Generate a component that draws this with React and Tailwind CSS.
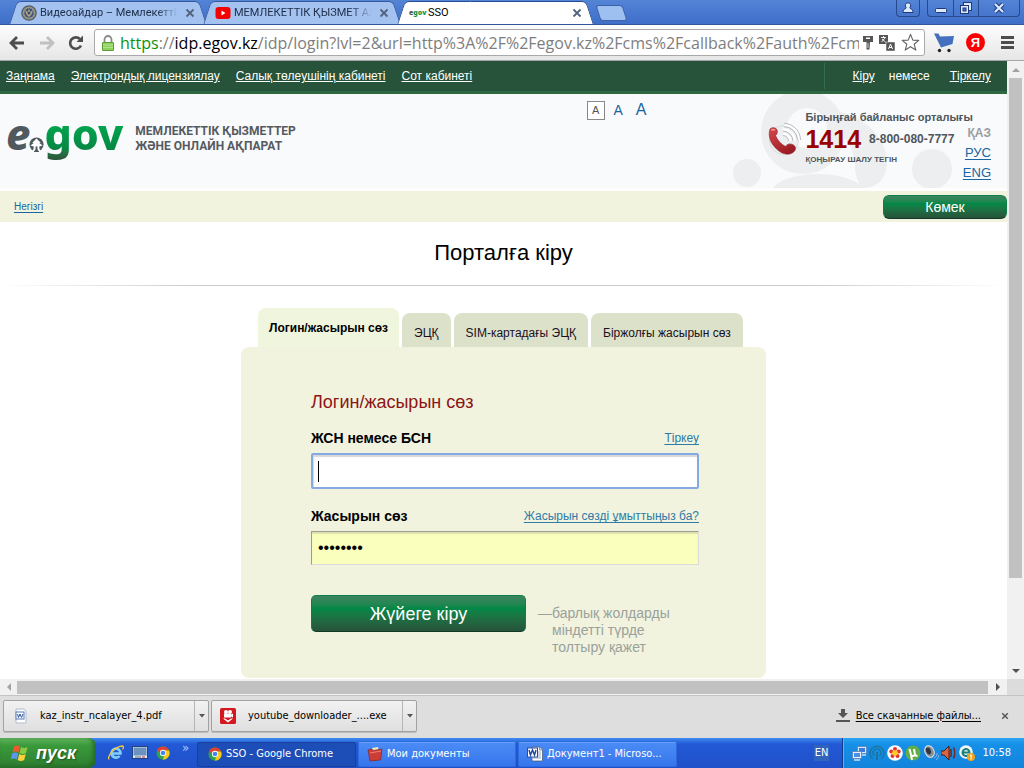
import React from "react";

const ui = "font-['DejaVu_Sans_Condensed','Noto_Sans',sans-serif]";

function CloseIcon({ className }) {
  return (
    <svg viewBox="0 0 10 10" className={className} aria-hidden="true">
      <path d="M1.5 1.5l7 7M8.500 1.500l-7 7" stroke="currentColor" strokeWidth="1.8" fill="none" />
    </svg>
  );
}

function EmblemIcon() {
  return (
    <svg viewBox="0 0 16 16" className="size-4 shrink-0" aria-hidden="true">
      <circle cx="8" cy="8" r="7.200" fill="#8c8d83" stroke="#555b66" strokeWidth="1.200" />
      <circle cx="8" cy="8" r="5" fill="#3f5379" stroke="#c4bb92" strokeWidth="1" strokeDasharray="1 1" />
      <path d="M4 5l2.500 2L8 4l1.500 3L12 5l-1.500 4.500L8 12l-2.500-2.500z" fill="#b5ac86" />
      <circle cx="8" cy="8" r="1.500" fill="#38496c" />
    </svg>
  );
}

function YoutubeIcon() {
  return (
    <svg viewBox="0 0 16 16" className="size-4 shrink-0" aria-hidden="true">
      <rect x="0.500" y="2" width="15" height="12" rx="3" fill="#f50000" />
      <path d="M6.500 5.500v5l4-2.500z" fill="#fff" />
    </svg>
  );
}

function ChromeIcon({ className }) {
  return (
    <svg viewBox="0 0 16 16" className={className} aria-hidden="true">
      <circle cx="8" cy="8" r="7.500" fill="#2fa04c" />
      <path d="M1.500 4.300A7.500 7.500 0 0 1 14.900 5H8a3.200 3.200 0 0 0-2.900 4.500z" fill="#e0402f" />
      <path d="M14.900 5A7.500 7.500 0 0 1 7.600 15.500l3.200-6.200A3.200 3.200 0 0 0 8 5z" fill="#fbc918" />
      <circle cx="8" cy="8" r="3.600" fill="#fff" />
      <circle cx="8" cy="8" r="2.700" fill="#4384ee" />
    </svg>
  );
}

function WordIcon({ className }) {
  return (
    <svg viewBox="0 0 16 16" className={className} aria-hidden="true">
      <path d="M5 1h8l2.500 2.500V15H5z" fill="#fff" stroke="#49617e" strokeWidth="0.800" />
      <path d="M12.500 1v3h3" fill="#c3d2e8" stroke="#49617e" strokeWidth="0.600" />
      <path d="M11 6h3M11 8h3M11 10h3M6 12h8" stroke="#90a5c4" strokeWidth="1" />
      <rect x="0.500" y="2" width="10" height="9" fill="#fff" stroke="#2a4c9a" />
      <path d="M2 4l1.500 5L5.500 4l2 5L9 4" stroke="#2448a0" strokeWidth="1.500" fill="none" />
    </svg>
  );
}

function BrowserTab({ icon, title, active, className }) {
  const side = active ? "bg-white border-[#284f94]" : "bg-[#a3c2ef] border-[#36599c]";
  return (
    <div className={`relative flex items-center ${className}`}>
      <span className={`absolute inset-y-0 left-0.5 w-3/5 origin-center -skew-x-[18deg] rounded-tl-[5px] border-t border-l ${side}`} />
      <span className={`absolute inset-y-0 right-0.5 w-3/5 origin-center skew-x-[18deg] rounded-tr-[5px] border-t border-r ${side}`} />
      <div className="relative flex min-w-0 flex-1 items-center gap-[3px] pr-2.5 pl-2.5">
        {icon}
        <span
          className={`min-w-0 flex-1 overflow-hidden font-['Roboto','Liberation_Sans',sans-serif] text-[11px] leading-4 whitespace-nowrap ${
            active ? "text-black" : "mask-r-from-85% text-[#20304c]"
          }`}
        >
          {title}
        </span>
        <button type="button" aria-label="Закрыть вкладку" className="ml-1 text-[#53627c]">
          <CloseIcon className="size-2.5" />
        </button>
      </div>
    </div>
  );
}

function TitleBar() {
  const win = "flex h-full items-center justify-center border-r border-[#28498c] last:border-r-0";
  return (
    <div className="flex h-[25px] shrink-0 items-start justify-between overflow-hidden border-b border-[#31569c] bg-linear-to-b from-[#5384d6] to-[#3f6ec8]">
      <div className="flex h-6 pl-[11px]">
        <BrowserTab className="mt-px w-[194px]" icon={<EmblemIcon />} title="Видеоайдар – Мемлекеттік" />
        <BrowserTab className="mt-px w-[194px]" icon={<YoutubeIcon />} title="МЕМЛЕКЕТТІК ҚЫЗМЕТ АЛУ" />
        <BrowserTab
          className="z-10 mt-px w-[193px]"
          active
          icon={
            <span className="w-4 shrink-0 overflow-visible font-['Noto_Sans'] text-[7px] leading-4 font-black whitespace-nowrap text-[#159447]">
              <span className="text-[#555]">e</span>gov
            </span>
          }
          title="SSO"
        />
        <button
          type="button"
          aria-label="Новая вкладка"
          className="mt-[5px] ml-1.5 h-4 w-[27px] skew-x-[18deg] rounded-[3px] border border-[#3b62aa] bg-[#9dc0f0]"
        />
      </div>
      <div className="flex h-[17px] gap-[7px] pr-1 text-[#e2edff]">
        <button type="button" aria-label="Пользователь" className="flex h-full w-6 items-center justify-center rounded-b border border-t-0 border-[#28498c]">
          <svg viewBox="0 0 12 12" className="size-3"><path d="M6 .8a2.700 2.700 0 0 1 2 4.500C7.500 6 8 6.500 9 6.800c1.500.5 2 1.500 2 3.700H1c0-2.200.5-3.200 2-3.700C4 6.500 4.500 6 4 5.300A2.700 2.700 0 0 1 6 .8z" fill="#dce9ff" stroke="#1d3a78" /></svg>
        </button>
        <div className="flex h-full w-[93px] rounded-b border border-t-0 border-[#28498c]">
          <button type="button" aria-label="Свернуть" className={`w-[26px] ${win}`}>
            <svg viewBox="0 0 12 12" className="size-3"><rect x="0.500" y="6.500" width="11" height="4" rx="1" fill="#dce9ff" stroke="#1d3a78" /></svg>
          </button>
          <button type="button" aria-label="Восстановить" className={`w-[25px] ${win}`}>
            <svg viewBox="0 0 14 14" className="size-3.5"><rect x="4.500" y="1.500" width="8" height="8" fill="#dce9ff" stroke="#1d3a78" /><rect x="1.500" y="4.500" width="8" height="8" fill="#dce9ff" stroke="#1d3a78" /><rect x="4" y="7" width="3" height="3" fill="#4270c8" stroke="#1d3a78" /></svg>
          </button>
          <button type="button" aria-label="Закрыть" className={`flex-1 ${win}`}>
            <svg viewBox="0 0 12 12" className="size-3"><path d="M2 2l8 8M10 2l-8 8" stroke="#1d3a78" strokeWidth="4.200" /><path d="M2 2l8 8M10 2l-8 8" stroke="#dce9ff" strokeWidth="2.200" /></svg>
          </button>
        </div>
      </div>
    </div>
  );
}

function Toolbar() {
  return (
    <div className="flex h-9 shrink-0 items-center border-b border-[#a5a5a5] bg-linear-to-b from-[#fdfdfd] to-[#e6e6e6] pr-2.5 pl-2">
      <div className="flex w-[86px] items-center gap-3 text-[#4d4d4d]">
        <button type="button" aria-label="Назад"><svg viewBox="0 0 18 16" className="h-4 w-[18px]"><path d="M9 2L3 8l6 6M3 8h13" fill="none" stroke="currentColor" strokeWidth="2.800" /></svg></button>
        <button type="button" aria-label="Вперёд" className="text-[#c0c0c0]"><svg viewBox="0 0 18 16" className="h-4 w-[18px]"><path d="M9 2l6 6-6 6M15 8H2" fill="none" stroke="currentColor" strokeWidth="2.800" /></svg></button>
        <button type="button" aria-label="Обновить"><svg viewBox="0 0 16 16" className="size-4"><path d="M13 10.500A5.700 5.700 0 1 1 12 4.200" fill="none" stroke="currentColor" strokeWidth="2.600" /><path d="M15 .5v6.500H8.500z" fill="currentColor" /></svg></button>
      </div>
      <div className="flex h-[27px] min-w-0 flex-1 items-center rounded-[3px] border border-[#a9a9a9] bg-white pr-1 pl-[7px]">
        <svg viewBox="0 0 12 16" className="h-4 w-3 shrink-0" aria-hidden="true">
          <path d="M2.500 8V4.500a3.500 3.500 0 0 1 7 0V8" fill="none" stroke="#8a8a8a" strokeWidth="1.800" />
          <rect x="0.500" y="7.500" width="11" height="8" rx="0.500" fill="#8fd05f" stroke="#5d9f34" />
          <path d="M1 10h10M1 12.500h10" stroke="#b1e38a" />
        </svg>
        <div className="ml-1.5 min-w-0 flex-1 overflow-hidden font-['Open_Sans','Noto_Sans',sans-serif] text-base leading-6 whitespace-nowrap text-[#7e7e7e]">
          <span className="text-[#0a930a]">https</span>://<span className="text-black">idp.egov.kz</span>/idp/login?lvl=2&amp;url=http%3A%2F%2Fegov.kz%2Fcms%2Fcallback%2Fauth%2Fcm
        </div>
        <div className="ml-1 flex shrink-0 items-center gap-1.5">
          <svg viewBox="0 0 10 14" className="h-3.5 w-2.5"><path d="M0 0h10v6H7l-.5 7.500h-3V6H0z" fill="#555" /><rect x="3" y="1.500" width="4" height="1.500" fill="#fff" /><path d="M5 7v5" stroke="#ccc" /></svg>
          <svg viewBox="0 0 16 16" className="size-4"><path d="M0 0h9v9H0z" fill="#555" /><path d="M2 2.500h5M4.500 1v1.500M2.500 7L6 3M3 4l3.500 3" stroke="#fff" strokeWidth="0.900" fill="none" /><path d="M7 7h9v9H7z" fill="#555" stroke="#fff" strokeWidth="0.500" /><path d="M9.500 14l2-5 2 5M10.200 12.500h2.600" stroke="#fff" fill="none" /></svg>
          <svg viewBox="0 0 20 20" className="size-[19px]"><path d="M10 1.500l2.500 6 6.200.3-4.900 4 1.800 6.200-5.600-3.600L4.400 18l1.800-6.200-4.900-4 6.200-.3z" fill="#fff" stroke="#666" strokeWidth="1.200" strokeLinejoin="round" /></svg>
        </div>
      </div>
      <div className="ml-[9px] flex shrink-0 items-center gap-3">
        <svg viewBox="0 0 20 20" className="size-5" role="img" aria-label="Покупки"><path d="M0 .5h4.500l1.500 3 14-.5-1.500 8L7 14.500z" fill="#4470bd" /><circle cx="5.500" cy="17.500" r="1.700" fill="#222" /><circle cx="15" cy="17.500" r="1.700" fill="#222" /></svg>
        <span className="flex size-[19px] items-center justify-center rounded-full bg-[#fb0000] font-['Liberation_Sans',sans-serif] text-[13px] leading-none font-bold text-white">Я</span>
        <button type="button" aria-label="Меню" className="ml-1 flex w-[13px] flex-col gap-0.5">
          <span className="h-[3px] bg-[#4d4d4d]" />
          <span className="h-[3px] bg-[#4d4d4d]" />
          <span className="h-[3px] bg-[#4d4d4d]" />
        </button>
      </div>
    </div>
  );
}

function EgovLogo() {
  return (
    <div className="mb-2.5 flex font-['Noto_Sans',sans-serif] text-[43px] leading-[60px] font-extrabold" aria-label="e.gov">
      <span className="text-[#50595d] italic">e</span>
      <svg viewBox="0 0 16 16" className="mt-[33px] -ml-px size-[15px]" aria-hidden="true">
        <circle cx="8" cy="8" r="7.500" fill="#50595d" />
        <path d="M8 1.500l4.500 4.500-1.500.5 3.500 2.500-3.500 1V12l1.500 4h-9L5 12v-2L1.500 9 5 6.500 3.500 6z" fill="#fff" />
        <path d="M7 10h2v3l2 3H5l2-3z" fill="#50595d" />
      </svg>
      <span className="bg-linear-to-b from-[#00a94f] from-30% via-[#058744] via-75% to-[#2c5a3c] to-90% bg-clip-text text-transparent">gov</span>
    </div>
  );
}

function PhoneIcon() {
  return (
    <svg viewBox="0 0 34 34" className="size-[34px] shrink-0" aria-hidden="true">
      <defs>
        <linearGradient id="handset" x1="0" y1="0" x2="0.600" y2="1">
          <stop offset="0" stopColor="#d84a4c" />
          <stop offset="1" stopColor="#9c1b24" />
        </linearGradient>
      </defs>
      <circle cx="17" cy="18" r="14.500" fill="#eceeef" stroke="#d8dadc" />
      <g fill="none" stroke="#fff" strokeWidth="2.600">
        <path d="M16 12a7 7 0 0 1 7 7" />
        <path d="M16 7.500A11.500 11.500 0 0 1 27.500 19" />
        <path d="M17 3A15 15 0 0 1 32 18" />
      </g>
      <g fill="none" stroke="#a8abad" strokeWidth="0.800">
        <path d="M16 13.500a5.500 5.500 0 0 1 5.500 5.500M16 9.200A10 10 0 0 1 26 19M17 4.700A13.500 13.500 0 0 1 30.500 18M17 1.500A16.500 16.500 0 0 1 33.500 18" />
      </g>
      <path d="M3 7c2-2 5-1.500 6.500 0 1.500 2 1 5-1 6.500 2 5 5.500 8.500 10 11 2-3 5-3 7-2 3 1.500 4 4 2 6.500-3 4-9 4-14 1C6 25.500 0 16 3 7z" fill="url(#handset)" stroke="#8c2029" strokeWidth="0.600" />
      <path d="M4.500 8.500c1-1.200 2.500-1 3.500-.3" stroke="#f29c98" strokeWidth="1.400" fill="none" />
    </svg>
  );
}

function SiteHeader() {
  const top = "underline underline-offset-1";
  return (
    <>
      <nav className="flex h-[33px] shrink-0 items-center justify-between border-b-3 border-[#2d6841] bg-[#26533a] pr-4 pl-1.5 text-xs text-white">
        <div className="flex gap-4">
          <a href="#law" className={top}>Заңнама</a>
          <a href="#license" className={top}>Электрондық лицензиялау</a>
          <a href="#tax" className={top}>Салық төлеушінің кабинеті</a>
          <a href="#court" className={top}>Сот кабинеті</a>
        </div>
        <div className="flex h-[26px] items-center border-l border-[#356e4a] pl-7">
          <a href="#login" className={top}>Кіру</a>
          <span className="mr-5 ml-3.5">немесе</span>
          <a href="#register" className={top}>Тіркелу</a>
        </div>
      </nav>
      <header className="relative flex h-[94px] shrink-0 justify-between overflow-hidden bg-[#f9fafc] pr-4 pl-1.5">
        <svg viewBox="0 0 240 94" className="absolute top-0 right-9 h-[94px] w-60" aria-hidden="true">
          <g fill="#eceeef">
            <path fillRule="evenodd" d="M72-4a42 42 0 1 0 .1 0zM76 14a20 20 0 1 1-.1 0z" />
            <circle cx="16" cy="79" r="14" />
            <circle cx="201" cy="75" r="20" />
            <path d="M100 16c30 4 58 26 56 56-2 15-12 22-24 22 0 0-8-6-8-22 0-18-10-30-22-34 4-8 2-16-2-22z" />
            <path d="M42 94c14-17 68-20 92 0z" />
          </g>
        </svg>
        <div className="relative flex items-center gap-3 pb-1">
          <EgovLogo />
          <p className="font-['Roboto','Liberation_Sans',sans-serif] text-xs leading-[15px] font-bold text-[#555a60]">
            МЕМЛЕКЕТТІК ҚЫЗМЕТТЕР
            <br />
            ЖӘНЕ ОНЛАЙН АҚПАРАТ
          </p>
        </div>
        <div className="relative flex items-start">
          <div className="mt-1.5 mr-[121px] flex items-center gap-[7px] text-[#1866a0]">
            <button type="button" aria-label="A, кіші" className="h-[19px] w-[18px] border border-[#888] bg-white text-[11px] text-[#555]">А</button>
            <button type="button" aria-label="A, орташа" className="w-[13px] text-sm">А</button>
            <button type="button" aria-label="A, үлкен" className="ml-1 text-base leading-5">А</button>
          </div>
          <div className="mt-7"><PhoneIcon /></div>
          <div className="mt-4 ml-1 text-[#4f565b]">
            <p className="text-[11px] leading-[14px] font-bold">Бірыңғай байланыс орталығы</p>
            <p className="flex items-center gap-2 leading-[30px]">
              <b className="text-[25px] text-[#9b0000]">1414</b>
              <b className="text-xs">8-800-080-7777</b>
            </p>
            <p className="text-[8px] leading-3 font-bold">ҚОҢЫРАУ ШАЛУ ТЕГІН</p>
          </div>
          <div className="mt-[29px] -ml-2.5 flex flex-col items-end text-[13px] leading-5 text-[#1866a0]">
            <b className="text-xs leading-5 text-[#999ea2]">ҚАЗ</b>
            <a href="#ru" className="underline underline-offset-2">РУС</a>
            <a href="#en" className="underline underline-offset-2">ENG</a>
          </div>
        </div>
      </header>
    </>
  );
}

const green =
  "border border-[#0b8049] border-b-[#123a24] bg-linear-to-b from-[#3d8361] via-[#008848] via-35% to-[#26533a] text-white";

function LoginTabs() {
  const tab = "h-[34px] rounded-t-lg bg-[#dce1ca] px-3 pt-1.5 text-[#20101e]";
  return (
    <div role="tablist" className="mx-[17px] flex items-end gap-[3px] text-xs">
      <button type="button" role="tab" aria-selected="true" className="h-[39px] rounded-t-lg bg-[#f0f5dd] px-[11px] font-bold">
        Логин/жасырын сөз
      </button>
      <button type="button" role="tab" aria-selected="false" className={tab}>ЭЦҚ</button>
      <button type="button" role="tab" aria-selected="false" className={tab}>SIM-картадағы ЭЦҚ</button>
      <button type="button" role="tab" aria-selected="false" className={tab}>Біржолғы жасырын сөз</button>
    </div>
  );
}

function LoginForm() {
  const link = "text-xs font-normal text-[#2f7ba6] underline underline-offset-2";
  return (
    <form className="flex flex-col rounded-lg bg-[#f1f3de] pt-[43px] pr-[67px] pb-[22px] pl-[70px]" onSubmit={(e) => e.preventDefault()}>
      <h2 className="text-lg leading-6 text-[#8c1515]">Логин/жасырын сөз</h2>
      <div className="mt-3.5 flex items-center justify-between leading-5">
        <label htmlFor="iin" className="text-sm font-bold">ЖСН немесе БСН</label>
        <a href="#signup" className={link}>Тіркеу</a>
      </div>
      <div className="relative mt-[5px]">
        <input id="iin" type="text" className="block h-9 w-full rounded-xs border-2 border-[#86a9e4] bg-white px-1.5 text-base shadow-[inset_1px_2px_1px_#d8d8d8] outline-none" />
        <span className="absolute top-2 left-[7px] h-[21px] w-px bg-black" />
      </div>
      <div className="mt-[17px] flex items-center justify-between leading-5">
        <label htmlFor="password" className="text-sm font-bold">Жасырын сөз</label>
        <a href="#forgot" className={link}>Жасырын сөзді ұмыттыңыз ба?</a>
      </div>
      <input
        id="password"
        type="password"
        defaultValue="password"
        className="mt-[5px] block h-[34px] w-full border border-[#dcdcdc] border-t-[#9c9c92] border-l-[#9c9c92] bg-[#faffbd] px-1.5 text-base shadow-[inset_0_2px_1px_#dfe2ac] outline-none"
      />
      <div className="mt-[30px] flex items-start gap-3">
        <button type="submit" className={`h-[37px] w-[215px] shrink-0 rounded-[5px] text-lg ${green}`}>Жүйеге кіру</button>
        <p className="mt-2.5 flex text-sm leading-[17px] text-[#9aa19c]">
          <span>—</span>
          <span>барлық жолдарды міндетті түрде толтыру қажет</span>
        </p>
      </div>
    </form>
  );
}

function Arrow({ d }) {
  return <svg viewBox="0 0 8 8" className="size-2" aria-hidden="true"><path d={d} fill="currentColor" /></svg>;
}

function Page() {
  return (
    <div className="flex min-h-0 flex-1 flex-col">
      <div className="flex min-h-0 flex-1">
        <div className="flex min-w-0 flex-1 flex-col overflow-hidden bg-white font-['Liberation_Sans',Arial,sans-serif]">
          <SiteHeader />
          <div className="mt-[3px] flex h-[31px] shrink-0 items-center justify-between bg-[#f1f3de] pl-3.5">
            <a href="#home" className="text-[10px] text-[#1866a0] underline underline-offset-2">Негізгі</a>
            <button type="button" className={`h-6 w-[124px] rounded-md text-sm leading-none ${green}`}>Көмек</button>
          </div>
          <h1 className="mt-[15px] text-center text-[22px] leading-8">Порталға кіру</h1>
          <div className="mt-4 flex h-px shrink-0">
            <div className="flex-1 bg-linear-to-r from-white to-[#cbcbcb]" />
            <div className="flex-[3] bg-[#cbcbcb]" />
            <div className="flex-1 bg-linear-to-r from-[#cbcbcb] to-white" />
          </div>
          <main className="mx-auto mt-[22px] w-[525px] max-w-full shrink-0">
            <LoginTabs />
            <LoginForm />
          </main>
        </div>
        <div className="flex w-[17px] shrink-0 flex-col items-center bg-[#f1f1f1]">
          <div className="flex h-[17px] items-center text-[#a3a3a3]"><Arrow d="M0 6l4-4 4 4z" /></div>
          <div className="min-h-0 w-[13px] flex-[500] bg-[#c1c1c1]" />
          <div className="flex-[84]" />
          <div className="flex h-[17px] items-center text-[#505050]"><Arrow d="M0 2l4 4 4-4z" /></div>
        </div>
      </div>
      <div className="flex h-4 shrink-0 items-center bg-[#f1f1f1]">
        <div className="flex w-[17px] justify-center text-[#a3a3a3]"><Arrow d="M6 0L2 4l4 4z" /></div>
        <div className="h-[13px] flex-1 bg-[#c1c1c1]" />
        <div className="flex w-[19px] justify-center text-[#505050]"><Arrow d="M2 0l4 4-4 4z" /></div>
        <div className="h-full w-[17px] bg-[#dcdcdc]" />
      </div>
    </div>
  );
}

function Download({ icon, name, className }) {
  return (
    <div className={`flex h-8 items-stretch rounded-xs border border-[#a2a2a2] bg-linear-to-b from-[#f2f2f2] to-[#dfdfdf] text-[11px] shadow-[0_1px_0_#bdbdbd] ${className}`}>
      <button type="button" className="flex min-w-0 flex-1 items-center gap-3 pl-2 whitespace-nowrap">
        {icon}
        {name}
      </button>
      <button type="button" aria-label="Действия" className="flex w-[14px] items-center justify-center border-l border-[#b4b4b4] text-[#555]">
        <svg viewBox="0 0 6 4" className="h-1 w-1.5"><path d="M0 0h6L3 3.500z" fill="currentColor" /></svg>
      </button>
    </div>
  );
}

function DownloadShelf() {
  return (
    <div className="flex h-[43px] shrink-0 items-center border-t border-[#c4c4c4] bg-[#dedede] pr-[15px] pb-0.5 pl-[3px]">
      <Download
        className="w-[206px]"
        name="kaz_instr_ncalayer_4.pdf"
        icon={
          <svg viewBox="0 0 16 16" className="size-4 shrink-0"><path d="M4 1h8l2 2v12H4z" fill="#fff" stroke="#b0bccd" /><rect x="4" y="4" width="8" height="7" fill="#fff" stroke="#5578b5" /><path d="M5.500 6l1 3.500L8 6l1.500 3.500L11 6" fill="none" stroke="#2d57a5" /></svg>
        }
      />
      <Download
        className="ml-0.5 w-[206px]"
        name="youtube_downloader_....exe"
        icon={
          <svg viewBox="0 0 16 16" className="size-4 shrink-0"><rect width="16" height="16" rx="1.500" fill="#d3191f" /><circle cx="6" cy="4" r="2" fill="#fff" /><circle cx="10" cy="4" r="2" fill="#fff" /><rect x="4" y="5.500" width="7" height="4" fill="#fff" /><path d="M11 6.500l2-1v4l-2-1zM3 10.500l5 4 5-4-2 0-3 2-3-2z" fill="#fff" /></svg>
        }
      />
      <div className="ml-auto flex items-center text-[11px]">
        <svg viewBox="0 0 14 14" className="mr-1.5 size-3.5"><path d="M5 0h4v4h3L7 9 2 4h3zM0 11h14v2H0z" fill="#555" /></svg>
        <a href="#downloads" className="text-black underline underline-offset-2">Все скачанные файлы...</a>
        <button type="button" aria-label="Закрыть" className="ml-5 text-[#555]"><CloseIcon className="size-2" /></button>
      </div>
    </div>
  );
}

function Tray() {
  return (
    <>
      <svg viewBox="0 0 16 16" className="size-4"><rect x="6.500" y="1.500" width="9" height="7" fill="#dcebfb" stroke="#5a7fb8" strokeWidth="0.800" /><rect x="8" y="3" width="6" height="4" fill="#3a7ade" /><rect x="1.500" y="6.500" width="9" height="7" fill="#e8f2fd" stroke="#5a7fb8" strokeWidth="0.800" /><rect x="3" y="8" width="6" height="4" fill="#4a90ea" /><path d="M3 15h6M11 10h4" stroke="#cfe0f5" strokeWidth="1.500" /></svg>
      <svg viewBox="0 0 16 16" className="size-4"><path d="M4 14A7 7 0 1 1 12 14M5.500 11A4 4 0 1 1 10.500 11" fill="none" stroke="#1775a0" strokeWidth="1.400" /><path d="M8 7v8" stroke="#1775a0" strokeWidth="2" /></svg>
      <svg viewBox="0 0 16 16" className="size-4"><circle cx="8" cy="8" r="7.800" fill="#fff" /><g fill="#e3332c"><circle cx="8" cy="4" r="2" /><circle cx="4.300" cy="6.500" r="2" /><circle cx="11.700" cy="6.500" r="2" /><circle cx="5.500" cy="11" r="2" /><circle cx="10.500" cy="11" r="2" /></g><circle cx="8" cy="8" r="2.800" fill="#fbca22" /></svg>
      <svg viewBox="0 0 16 16" className="size-4"><circle cx="8" cy="8" r="7.500" fill="#62ad45" /><path d="M4.500 4l1.500 5.500c.6 2 3 2 4 0L9 4M10 9.500c.5 1.500 1.500 1.500 2.500 1M6 10l1 5" fill="none" stroke="#fff" strokeWidth="2" /></svg>
      <svg viewBox="0 0 16 16" className="size-4"><ellipse cx="6.500" cy="6.500" rx="4.500" ry="6" transform="rotate(-25 6.500 6.500)" fill="#8a8d91" stroke="#e3e5e8" /><ellipse cx="5.500" cy="6" rx="2.300" ry="3.500" transform="rotate(-25 5.500 6)" fill="#33373c" /><path d="M11 13c2-1 3-2.500 3-5M13 15c2-1 2.500-2.500 2.500-5" fill="none" stroke="#8eb4e8" /></svg>
      <svg viewBox="0 0 16 16" className="size-4"><path d="M0 6h3l5-5v14l-5-5H0z" fill="#d96640" stroke="#4b1b12" /><path d="M10 4v8M12.500 2.500c1.500 3 1.500 8 0 11" fill="none" stroke="#7b2521" strokeWidth="1.600" /></svg>
      <svg viewBox="0 0 16 16" className="size-4"><circle cx="7" cy="7" r="6.800" fill="#eff6f5" /><path d="M4 7.500h6.500A3.500 3.500 0 1 0 9.500 10" fill="none" stroke="#16807c" strokeWidth="2" /><circle cx="12" cy="12" r="4" fill="#f0a31d" /><path d="M12 9.500v3M12 13.300v1.200" stroke="#fff" strokeWidth="1.400" /></svg>
    </>
  );
}

function Taskbar() {
  const task =
    "flex h-[25px] items-center gap-1 rounded-xs border px-2 text-[11px] whitespace-nowrap text-white";
  const idle = "border-[#2f6be0] border-t-[#6a9df8] bg-linear-to-b from-[#4b8bf5] to-[#3676ec]";
  return (
    <div className="flex h-[30px] shrink-0 items-stretch bg-linear-to-b from-[#3f8cf0] via-[#2359d6] via-20% to-[#1f50c8]">
      <button
        type="button"
        className="flex w-24 shrink-0 items-center gap-1.5 rounded-r-lg bg-linear-to-b from-[#61b35d] via-[#3a9a3b] via-25% to-[#2f7d2f] pl-2.5 font-['Liberation_Sans',sans-serif] text-lg leading-none font-bold text-white italic shadow-[inset_-3px_-2px_4px_#236b28] text-shadow-[1px_1px_2px_#1a4d1c]"
      >
        <svg viewBox="0 0 20 18" className="h-[18px] w-5" aria-hidden="true">
          <path d="M4 2.500c2-1.500 4-1.500 6 0L8.500 8.500c-2-1.200-4-1.200-6 0z" fill="#ee5a2c" />
          <path d="M11 3c2 1.200 4 1.200 6.500 0L16 9c-2 1.200-4.500 1.200-6.500 0z" fill="#8bcb42" />
          <path d="M2.200 9.500c2-1.300 4-1.300 6 0L6.700 15.500c-2-1.300-4-1.300-6 0z" fill="#5c96ee" />
          <path d="M9.200 10c2 1.200 4.300 1.200 6.500 0l-1.500 6c-2.300 1.200-4.500 1.200-6.500 0z" fill="#fbd03c" />
        </svg>
        пуск
      </button>
      <div className="flex w-[101px] shrink-0 items-center gap-2 pl-3">
        <svg viewBox="0 0 16 16" className="size-4"><path d="M4 8.500h8.500A4.500 4.500 0 1 0 11.500 11" fill="none" stroke="#7fd0fb" strokeWidth="2.600" /><path d="M1 14.500C-1 11 6 2 14 1c2 0 1.500 2 .5 3.500" fill="none" stroke="#f3c53b" strokeWidth="1.300" /></svg>
        <svg viewBox="0 0 16 16" className="size-4"><rect x="0.500" y="1.500" width="15" height="12" fill="#dfe8f2" stroke="#22437c" /><rect x="1.500" y="2.500" width="13" height="8" fill="#6b93bd" /><path d="M3 12h6" stroke="#64748b" /><path d="M10 12h3" stroke="#d12c24" /></svg>
        <ChromeIcon className="size-3.5" />
        <span className="mb-3 ml-1 text-[13px] leading-none text-[#a9ccff]">»</span>
      </div>
      <div className="flex min-w-0 flex-1 items-center gap-0.5 pt-0.5">
        <button type="button" className={`w-[159px] border-[#173f9c] bg-[#1d4db7] pl-2.5 ${task}`}>
          <ChromeIcon className="size-3.5 shrink-0" />
          <span>SSO - Google Chrome</span>
        </button>
        <button type="button" className={`w-[158px] ${task} ${idle}`}>
          <svg viewBox="0 0 16 16" className="size-4 shrink-0"><path d="M5 2l6-1 1 5-6 1z" fill="#f3e7c5" /><path d="M1 4l4-1 1 1.500L15 3l-1.500 11L3 15z" fill="#cc3e35" stroke="#7f1d1d" strokeWidth="0.600" /><path d="M3 7l11-2" stroke="#ec8178" /></svg>
          Мои документы
        </button>
        <button type="button" className={`w-[159px] ${task} ${idle}`}>
          <WordIcon className="size-4 shrink-0" />
          Документ1 - Microso...
        </button>
      </div>
      <span className="mr-[13px] self-center bg-[#3364bb] px-px text-[11px] leading-4 text-white">EN</span>
      <div className="flex shrink-0 items-center gap-0.5 border-l border-[#123a8c] bg-linear-to-b from-[#2ba5f2] via-[#1690e8] via-20% to-[#1384dc] pr-[13px] pl-2 text-[11px] text-white shadow-[inset_1px_0_0_#48bdf5]">
        <Tray />
        <span className="ml-[5px]">10:58</span>
      </div>
    </div>
  );
}

export default function App() {
  return (
    <div className={`flex h-screen flex-col overflow-hidden bg-white text-black ${ui}`}>
      <TitleBar />
      <Toolbar />
      <Page />
      <DownloadShelf />
      <Taskbar />
    </div>
  );
}
